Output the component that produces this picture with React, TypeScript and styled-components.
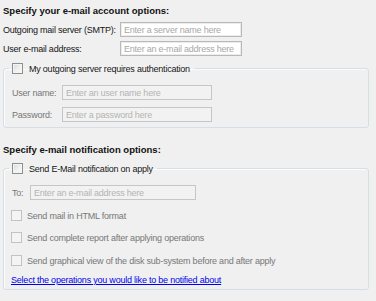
import React from "react";
import styled, { createGlobalStyle } from "styled-components";

const GlobalStyle = createGlobalStyle`
  html, body {
    margin: 0;
    padding: 0;
    background: #f0f0f0;
  }
  body {
    font-family: "Liberation Sans", Arial, sans-serif;
    font-size: 9px;
    color: #1a1a1a;
  }
`;

const Page = styled.div`
  display: flex;
  flex-direction: column;
  width: 366px;
  padding: 4px 0 0 3px;
`;

const Heading = styled.h2<{ $top?: number }>`
  margin: ${(p) => p.$top ?? 0}px 0 0;
  font-size: 9.5px;
  font-weight: 700;
  line-height: 14px;
  color: #111;
`;

const Rows = styled.div<{ $top: number; $gap: number }>`
  display: flex;
  flex-direction: column;
  gap: ${(p) => p.$gap}px;
  margin-top: ${(p) => p.$top}px;
`;

const FormRow = styled.div<{ $label: number }>`
  display: grid;
  grid-template-columns: ${(p) => p.$label}px auto;
  align-items: center;
  height: 15px;
`;

const Label = styled.label<{ $disabled?: boolean }>`
  font-size: 9px;
  letter-spacing: -0.22px;
  line-height: 14px;
  white-space: nowrap;
  color: ${(p) => (p.$disabled ? "#777" : "#151515")};
`;

const TextInput = styled.input<{ $width: number }>`
  box-sizing: border-box;
  width: ${(p) => p.$width}px;
  height: 15px;
  margin: 0;
  padding: 0 3px;
  border: 1px solid #b9b9b9;
  box-shadow: inset 0 0 0 1px #ececec;
  background: #fff;
  font-family: "Liberation Sans", Arial, sans-serif;
  font-size: 9px;
  letter-spacing: -0.22px;
  color: #1a1a1a;
  outline: none;

  &::placeholder {
    color: #a8a8a8;
  }

  &:disabled {
    background: #f2f2f2;
    border-color: #c6c6c6;
    box-shadow: none;
  }

  &:disabled::placeholder {
    color: #b4b4b4;
  }
`;

const Group = styled.fieldset<{ $top: number; $padTop: number; $padBottom: number }>`
  margin: ${(p) => p.$top}px 0 0;
  padding: ${(p) => p.$padTop}px 8px ${(p) => p.$padBottom}px 8px;
  border: 1px solid #d5dfe5;
  border-radius: 3px;
  box-shadow: inset 1px 1px 0 #fafcfd;
  min-width: 0;
`;

const Legend = styled.legend`
  display: flex;
  align-items: center;
  gap: 6px;
  height: 11px;
  margin-left: -3px;
  padding: 0 4px 0 3px;
`;

const Check = styled.input.attrs({ type: "checkbox" })`
  appearance: none;
  box-sizing: border-box;
  flex: none;
  width: 11px;
  height: 11px;
  margin: 0;
  border: 1px solid #8e8f8f;
  background: linear-gradient(135deg, #d8d8d8 0%, #f0f0f0 55%, #fbfbfb 100%);
  box-shadow: inset 0 0 0 1px #f4f4f4;

  &:disabled {
    border-color: #c3c3c3;
    background: #f4f4f4;
    box-shadow: none;
  }
`;

const CheckRow = styled.div<{ $top?: number }>`
  display: flex;
  align-items: center;
  gap: 5px;
  height: 11px;
  margin-top: ${(p) => p.$top ?? 0}px;
  margin-left: -1px;
`;

const Link = styled.a`
  display: block;
  margin: 7px 0 0 -1px;
  font-size: 9px;
  letter-spacing: -0.22px;
  line-height: 14px;
  color: #0000ee;
  text-decoration: underline;
  cursor: pointer;
`;

const App: React.FC = () => {
  return (
    <Page>
      <GlobalStyle />
      <Heading>Specify your e-mail account options:</Heading>
      <Rows $top={4} $gap={4}>
        <FormRow $label={117}>
          <Label>Outgoing mail server (SMTP):</Label>
          <TextInput $width={122} placeholder="Enter a server name here" />
        </FormRow>
        <FormRow $label={117}>
          <Label>User e-mail address:</Label>
          <TextInput $width={122} placeholder="Enter an e-mail address here" />
        </FormRow>
      </Rows>

      <Group $top={7} $padTop={11} $padBottom={5}>
        <Legend>
          <Check />
          <Label>My outgoing server requires authentication</Label>
        </Legend>
        <Rows $top={0} $gap={7}>
          <FormRow $label={50}>
            <Label $disabled>User name:</Label>
            <TextInput $width={150} disabled placeholder="Enter an user name here" />
          </FormRow>
          <FormRow $label={50}>
            <Label $disabled>Password:</Label>
            <TextInput $width={150} disabled placeholder="Enter a password here" />
          </FormRow>
        </Rows>
      </Group>

      <Heading $top={15}>Specify e-mail notification options:</Heading>

      <Group $top={6} $padTop={11} $padBottom={2}>
        <Legend>
          <Check />
          <Label>Send E-Mail notification on apply</Label>
        </Legend>
        <FormRow $label={18}>
          <Label $disabled>To:</Label>
          <TextInput $width={166} disabled placeholder="Enter an e-mail address here" />
        </FormRow>
        <CheckRow $top={10}>
          <Check disabled />
          <Label $disabled>Send mail in HTML format</Label>
        </CheckRow>
        <CheckRow $top={11}>
          <Check disabled />
          <Label $disabled>Send complete report after applying operations</Label>
        </CheckRow>
        <CheckRow $top={12}>
          <Check disabled />
          <Label $disabled>Send graphical view of the disk sub-system before and after apply</Label>
        </CheckRow>
        <Link>Select the operations you would like to be notified about</Link>
      </Group>
    </Page>
  );
};

export default App;
